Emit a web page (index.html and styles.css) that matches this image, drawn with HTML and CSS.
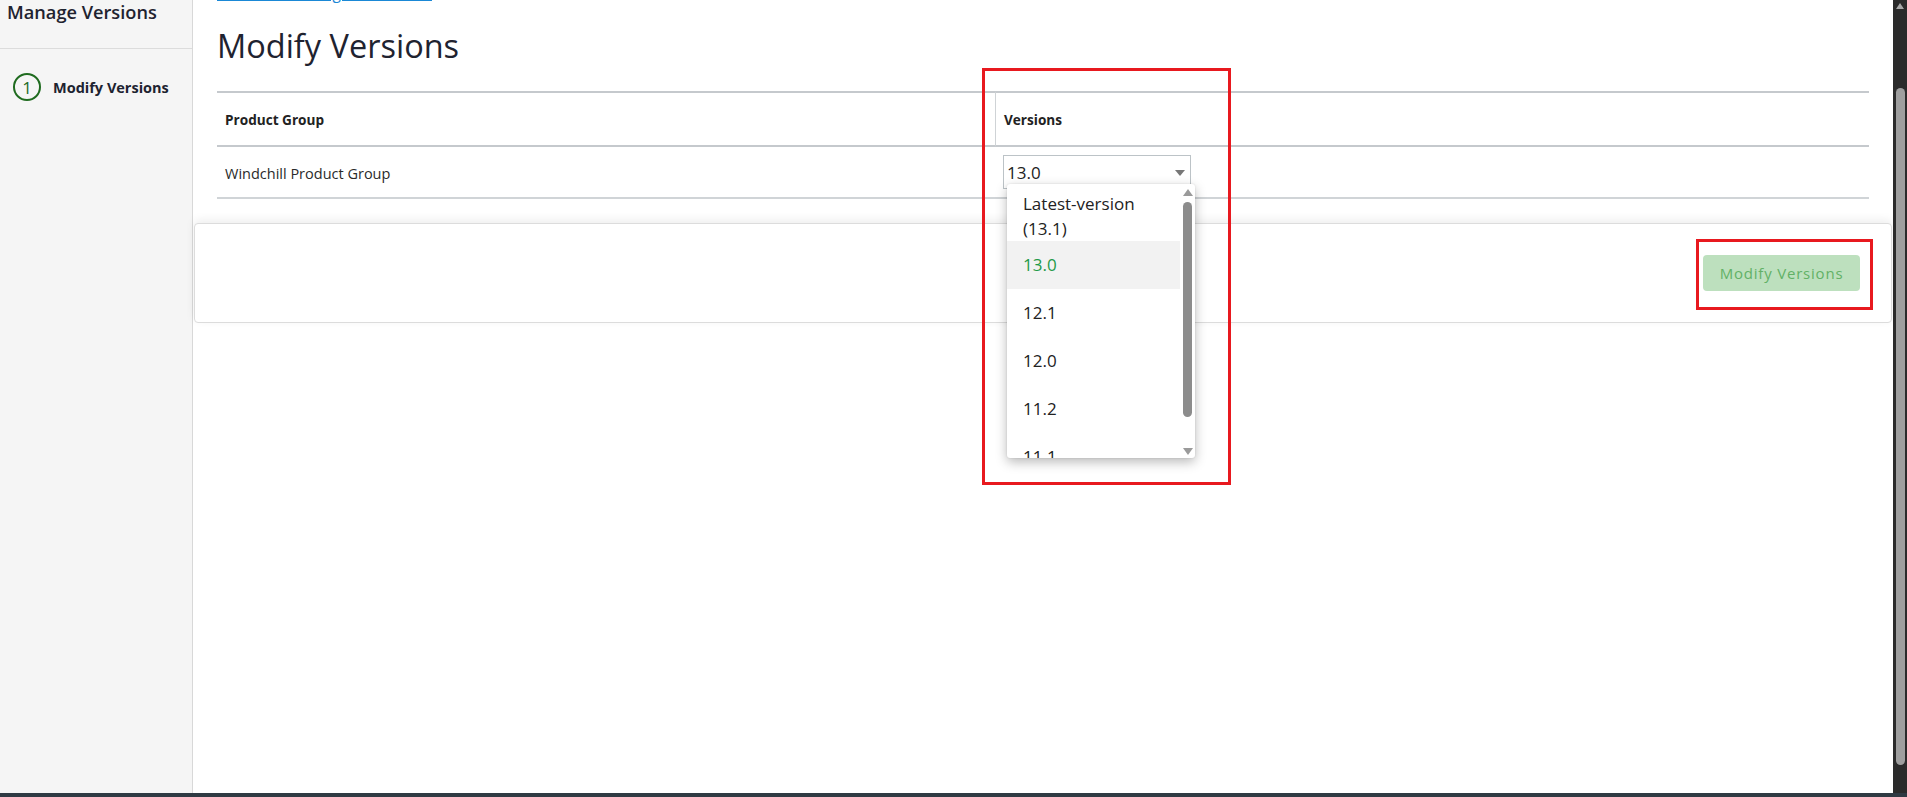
FILE: index.html
```html
<!DOCTYPE html>
<html lang="en">
<head>
<meta charset="utf-8">
<title>Manage Versions</title>
<link rel="stylesheet" href="styles.css">
</head>
<body>
<div class="app">
  <div class="frame">
    <aside class="sidebar">
      <div class="side-head"><h2 class="side-title">Manage Versions</h2></div>
      <ol class="steps">
        <li class="step"><span class="step-num">1</span><span class="step-label">Modify Versions</span></li>
      </ol>
    </aside>
    <main class="content">
      <div class="page">
        <a class="back-link" href="#">Back to Licensing Host Details</a>
        <h1 class="page-title">Modify Versions</h1>
        <table class="grid">
          <colgroup><col class="col-a"><col class="col-b"></colgroup>
          <thead>
            <tr><th>Product Group</th><th class="th-versions">Versions</th></tr>
          </thead>
          <tbody>
            <tr>
              <td class="td-name">Windchill Product Group</td>
              <td>
                <div class="select">
                  <span class="select-value">13.0</span>
                  <span class="select-arrow"></span>
                  <div class="dropdown">
                    <ul class="options">
                      <li class="option option-first">Latest-version (13.1)</li>
                      <li class="option option-selected">13.0</li>
                      <li class="option">12.1</li>
                      <li class="option">12.0</li>
                      <li class="option">11.2</li>
                      <li class="option">11.1</li>
                    </ul>
                    <div class="dd-scroll">
                      <span class="dd-up"></span>
                      <span class="dd-thumb"></span>
                      <span class="dd-down"></span>
                    </div>
                  </div>
                </div>
              </td>
            </tr>
          </tbody>
        </table>
      </div>
      <div class="footer-card">
        <button class="btn-primary" type="button">Modify Versions</button>
      </div>
      <div class="annot annot-a"></div>
      <div class="annot annot-b"></div>
    </main>
    <div class="vscroll">
      <span class="vs-up"></span>
      <span class="vs-thumb"></span>
    </div>
  </div>
  <div class="taskbar"></div>
</div>
</body>
</html>
```
FILE: styles.css
```css
* { box-sizing: border-box; }
html, body { margin: 0; padding: 0; height: 100%; overflow: hidden; }
body { font-family: "Open Sans", "Noto Sans", sans-serif; color: #222; background: #fff; }

.app { display: flex; flex-direction: column; height: 797px; width: 1907px; }
.frame { display: flex; flex: 1; min-height: 0; }
.taskbar { height: 4px; background: #2f3a43; flex: none; }

/* sidebar */
.sidebar { width: 193px; flex: none; background: #f5f5f5; border-right: 1px solid #d8d8d8; }
.side-head { height: 49px; border-bottom: 1px solid #dcdcdc; }
.side-title { margin: 0; padding: 0 7px; font-size: 18.2px; line-height: 24px; font-weight: 600; color: #1f2330; }
.steps { list-style: none; margin: 0; padding: 0; }
.step { display: flex; align-items: center; gap: 12px; margin-top: 24px; padding-left: 13px; }
.step-num { width: 28px; height: 28px; border: 2px solid #1f6b1f; border-radius: 50%; display: flex; align-items: center; justify-content: center; font-size: 17px; color: #1f6b1f; line-height: 1; }
.step-label { font-size: 14.5px; font-weight: 700; color: #1d2330; }

/* content */
.content { flex: 1; position: relative; min-width: 0; background: #fff; }
.page { padding: 0 24px; }
.back-link { display: block; margin-top: -17px; font-size: 15.5px; line-height: 20px; color: #1a88d6; text-decoration: underline; width: max-content; }
.page-title { margin: 21px 0 0; font-size: 32.5px; line-height: 44px; font-weight: 400; color: #1f2330; }

.grid { margin-top: 23px; width: 100%; border-collapse: separate; border-spacing: 0; table-layout: fixed; }
.col-a { width: 778px; }
.grid th { text-align: left; font-size: 13.6px; font-weight: 700; color: #222; padding: 19px 8px 17px; line-height: 16px; border-top: 2px solid #c5c9cd; border-bottom: 2px solid #c5c9cd; }
.grid th.th-versions { border-left: 1px solid #cfd3d6; }
.grid td { font-size: 14.5px; color: #2a2a2a; padding: 8px; line-height: 18px; border-bottom: 2px solid #d0d4d7; vertical-align: middle; }
.grid td.td-name { padding-top: 10px; padding-bottom: 6px; }

.select { position: relative; width: 188px; height: 34px; border: 1px solid #bcc3c7; padding: 0 3px; font-size: 17px; line-height: 33px; color: #222; background: #fff; }
.select-arrow { position: absolute; right: 5px; top: 14px; width: 0; height: 0; border-left: 5px solid transparent; border-right: 5px solid transparent; border-top: 6px solid #777; }

.dropdown { position: absolute; left: 3px; top: 28px; width: 188px; height: 274px; background: #fff; border-radius: 3px; box-shadow: 0 4px 12px rgba(0,0,0,0.28), 0 0 2px rgba(0,0,0,0.12); display: flex; overflow: hidden; z-index: 5; }
.options { list-style: none; margin: 0; padding: 0; width: 173px; flex: none; }
.option { padding: 12px 16px; font-size: 17px; line-height: 24px; color: #222; }
.option-first { padding: 7px 12px 0 16px; line-height: 25px; height: 57px; }
.option-selected { background: #f2f2f2; color: #1f9a48; }
.dd-scroll { position: relative; flex: 1; }
.dd-up { position: absolute; left: 3px; top: 5px; width: 0; height: 0; border-left: 5px solid transparent; border-right: 5px solid transparent; border-bottom: 7px solid #9a9a9a; }
.dd-down { position: absolute; left: 3px; bottom: 3px; width: 0; height: 0; border-left: 5px solid transparent; border-right: 5px solid transparent; border-top: 7px solid #9a9a9a; }
.dd-thumb { position: absolute; left: 3px; top: 18px; width: 9px; height: 215px; border-radius: 5px; background: #8c8c8c; }

.footer-card { margin: 24px 1px 0; height: 100px; border: 1px solid #dcdcdc; border-radius: 4px; display: flex; align-items: center; justify-content: flex-end; padding-right: 31px; box-shadow: 0 -3px 10px rgba(0,0,0,0.07); background: #fff; }
.btn-primary { width: 157px; height: 36px; border: none; border-radius: 4px; background: #bde0be; color: #62b166; font-family: "Open Sans", sans-serif; font-size: 15px; font-weight: 500; letter-spacing: 0.8px; padding: 0; }

.annot { position: absolute; border: 3px solid #e8191f; pointer-events: none; z-index: 10; }
.annot-a { left: 789px; top: 68px; width: 249px; height: 417px; }
.annot-b { left: 1503px; top: 239px; width: 177px; height: 71px; }

/* window scrollbar */
.vscroll { width: 14px; flex: none; background: #2b2b2b; position: relative; }
.vs-up { position: absolute; left: 3px; top: 3px; width: 0; height: 0; border-left: 4px solid transparent; border-right: 4px solid transparent; border-bottom: 6px solid #a8a8a8; }
.vs-thumb { position: absolute; left: 3px; top: 88px; width: 9px; height: 677px; border-radius: 5px; background: #9f9f9f; }
```
